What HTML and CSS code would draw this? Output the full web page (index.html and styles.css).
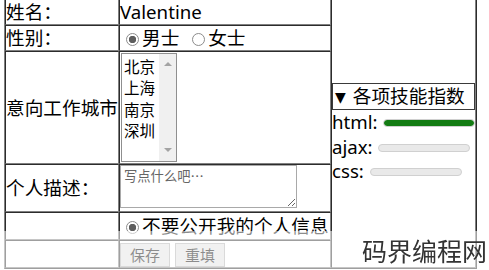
FILE: index.html
```html
<!DOCTYPE html>
<html lang="zh-CN">
<head>
    <meta charset="UTF-8">
    <meta name="viewport" content="width=device-width, initial-scale=1.0">
    <title>个人信息</title>
    <link rel="stylesheet" href="styles.css">
</head>
<body>
    <form class="profile">
        <table class="profile-table">
            <colgroup>
                <col class="col-label">
                <col class="col-field">
                <col class="col-skills">
            </colgroup>
            <tr class="row-line">
                <td>姓名：</td>
                <td>Valentine</td>
                <td class="skills" rowspan="6">
                    <details open>
                        <summary><span class="arrow">▼</span>各项技能指数</summary>
                        <div class="skill">html: <span class="meter" role="meter" aria-valuenow="100"><span class="meter-fill" style="width: 100%"></span></span></div>
                        <div class="skill">ajax: <span class="meter" role="meter" aria-valuenow="0"><span class="meter-fill" style="width: 0%"></span></span></div>
                        <div class="skill">css: <span class="meter" role="meter" aria-valuenow="0"><span class="meter-fill" style="width: 0%"></span></span></div>
                    </details>
                </td>
            </tr>
            <tr class="row-line">
                <td>性别：</td>
                <td>
                    <label><input class="radio" type="radio" name="sex" checked>男士</label>
                    <label class="second"><input class="radio" type="radio" name="sex">女士</label>
                </td>
            </tr>
            <tr class="row-city">
                <td>意向工作城市</td>
                <td>
                    <div class="listbox" role="listbox">
                        <div class="options">
                            <div>北京</div>
                            <div>上海</div>
                            <div>南京</div>
                            <div>深圳</div>
                        </div>
                        <div class="scrollbar">
                            <span class="arrow-up"></span>
                            <span class="arrow-down"></span>
                        </div>
                    </div>
                </td>
            </tr>
            <tr class="row-desc">
                <td>个人描述：</td>
                <td class="top"><textarea class="desc" placeholder="写点什么吧…"></textarea></td>
            </tr>
            <tr class="row-short">
                <td></td>
                <td class="clip"><label><input class="radio" type="radio" name="privacy" checked>不要公开我的个人信息</label></td>
            </tr>
            <tr class="row-short">
                <td></td>
                <td>
                    <button class="btn" type="submit">保存</button>
                    <button class="btn" type="reset">重填</button>
                </td>
            </tr>
        </table>
    </form>

    <div class="band"></div>
    <div class="watermark">码界编程网</div>
</body>
</html>
```

FILE: styles.css
```css
* {
    box-sizing: border-box;
}

body {
    margin: 0 0 0 4px;
    background: #fff;
    color: #000;
    font-family: "Noto Sans", "Noto Sans CJK SC", sans-serif;
    font-size: 18.67px;
}

/* table */
.profile-table {
    width: 473px;
    margin-top: -2px;
    table-layout: fixed;
    border-spacing: 0;
    border: 1px outset gray;
    line-height: 24px;
}

.profile-table td {
    border: 1px inset gray;
    padding: 0;
    vertical-align: middle;
}

.col-label { width: 114px; }
.col-field { width: 212px; }
.col-skills { width: 145px; }

.row-line td { height: 26px; }
.row-city td { height: 113px; }
.row-desc td { height: 48px; }
.row-short td { height: 28px; }

.profile-table td.top { vertical-align: top; }

.profile-table td.clip {
    white-space: nowrap;
    overflow: hidden;
}

/* radio */
.radio {
    appearance: none;
    width: 13px;
    height: 13px;
    margin: 0 3px 0 6px;
    border: 1px solid #8c8c8c;
    border-radius: 50%;
    background: #fff;
    vertical-align: -1px;
}

.radio:checked {
    background: radial-gradient(circle, #5e5e5e 0 3.4px, #fff 4px);
}

.second .radio { margin-left: 8px; }

/* city list */
.listbox {
    display: flex;
    width: 56px;
    height: 109px;
    margin-left: 1px;
    border: 1px solid #8f8f8f;
    background: #fff;
    font-family: "Noto Sans CJK SC", sans-serif;
    font-size: 15.5px;
    line-height: 21.3px;
}

.options {
    flex: 1;
    padding: 2px 0 0 2px;
}

.scrollbar {
    width: 17px;
    background: #f0f0f0;
    display: flex;
    flex-direction: column;
    justify-content: space-between;
    align-items: center;
    padding: 8px 0 9px;
}

.arrow-up,
.arrow-down {
    width: 0;
    height: 0;
    border-left: 4px solid transparent;
    border-right: 4px solid transparent;
}

.arrow-up { border-bottom: 4px solid #a3a3a3; }
.arrow-down { border-top: 4px solid #a3a3a3; }

/* description */
.desc {
    display: block;
    width: 177px;
    height: 43px;
    margin: 0;
    padding: 2px 3px;
    border: 1px solid #a9a9a9;
    font-family: "Noto Sans CJK SC", sans-serif;
    font-size: 13.3px;
    line-height: 16px;
}

.desc::placeholder { color: #666; }

/* buttons */
.btn {
    height: 24px;
    padding: 0 9px;
    border: 1px solid #adadad;
    background: #e1e1e1;
    color: #000;
    font-family: "Noto Sans CJK SC", sans-serif;
    font-size: 15px;
    line-height: 20px;
    vertical-align: middle;
}

/* skills */
.skills details { display: block; }

.skills summary {
    display: block;
    list-style: none;
    border: 1px solid #3a3a3a;
    line-height: 24px;
    padding-left: 2px;
}

.skills summary::-webkit-details-marker { display: none; }

.arrow {
    display: inline-block;
    margin-right: 7px;
    font-family: "DejaVu Sans", sans-serif;
    font-size: 14px;
    vertical-align: 1px;
}

.skill {
    white-space: nowrap;
    line-height: 24.5px;
}

.meter {
    display: inline-block;
    width: 92px;
    height: 8px;
    margin-left: 1px;
    border: 1px solid #d0d0d0;
    border-radius: 4px;
    background: #e9e9e9;
    vertical-align: 2px;
    overflow: hidden;
}

.meter-fill {
    display: block;
    height: 100%;
    border-radius: 4px;
    background: #137c13;
}

/* watermark over the bottom */
.band {
    position: fixed;
    left: 0;
    right: 0;
    top: 231px;
    bottom: 0;
    background: rgba(255, 255, 255, 0.55);
}

.watermark {
    position: fixed;
    right: 2px;
    top: 236px;
    font-family: "Noto Sans CJK SC", sans-serif;
    font-size: 25px;
    line-height: 28px;
    color: #333;
}
```
